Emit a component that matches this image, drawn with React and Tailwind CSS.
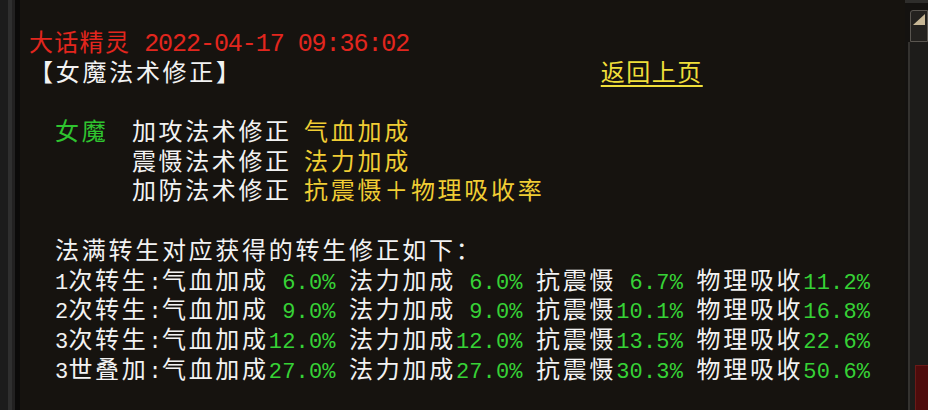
const ZH = "font-['Noto_Sans_CJK_SC',sans-serif] text-[24px]";
const MONO = "font-['Liberation_Mono',monospace] whitespace-pre";

function Zh({ children, className = "" }) {
  return <span className={`${ZH} tracking-[2.72px] ${className}`}>{children}</span>;
}

function En({ children, className = "" }) {
  return <span className={`${MONO} text-[22px] tracking-[0.16px] ${className}`}>{children}</span>;
}

function Val({ v }) {
  return <En className="text-[#36d236]">{(v + "%").padStart(5, " ")}</En>;
}

const ROWS = [
  ["1", "次转生", ["6.0", "6.0", "6.7", "11.2"]],
  ["2", "次转生", ["9.0", "9.0", "10.1", "16.8"]],
  ["3", "次转生", ["12.0", "12.0", "13.5", "22.6"]],
  ["3", "世叠加", ["27.0", "27.0", "30.3", "50.6"]],
];

const SPELLS = [
  ["女魔", "加攻法术修正", "气血加成"],
  ["", "震慑法术修正", "法力加成"],
  ["", "加防法术修正", "抗震慑＋物理吸收率"],
];

function Line({ children, className = "" }) {
  return (
    <div className={`h-[29.7px] leading-[29.7px] whitespace-nowrap flex items-baseline ${className}`}>
      {children}
    </div>
  );
}

function ScrollBar() {
  return (
    <div className="w-[23px] flex flex-col bg-[#141210]">
      <div className="h-[3px] bg-[#2e2d2b]" />
      <div className="h-[7px]" />
      <div className="ml-[5px] h-[32px] border border-[#5a5650] rounded-tl-[3px] bg-[#24221f] overflow-hidden">
        <svg width="18" height="30" viewBox="0 0 18 30">
          <polygon points="2,14 14,3 14,14" fill="#c8b896" />
        </svg>
      </div>
      <div className="ml-[3px] flex-1 flex flex-col justify-end border-l-2 border-[#34322f] bg-[#1d1c1a]">
        <div className="ml-[5px] h-[45px] bg-[#4e0c0c] border-t border-l border-[#6a1a18]" />
      </div>
    </div>
  );
}

export default function App() {
  return (
    <div className="w-[928px] h-[410px] flex bg-[#16130f] overflow-hidden text-[#f2f2f2]">
      <div className="flex">
        <div className="w-[8px] bg-[#1c1c1c]" />
        <div className="w-[4px] bg-[#2f2f2f]" />
        <div className="w-[3px] bg-[#222121]" />
        <div className="w-[5px] bg-[#0b0a09]" />
      </div>

      <div className="flex-1 pt-[26px] pl-[9px]">
        <Line className="text-[#e2261e]">
          <span className={`${ZH} tracking-[1.3px]`}>大话精灵</span>
          <span className={`${MONO} text-[25px] tracking-[-1.05px]`}> 2022-04-17 09:36:02</span>
        </Line>

        <Line>
          <Zh>【女魔法术修正】</Zh>
          <span
            className={`${ZH} tracking-[1.5px] ml-[358px] text-[#f0df3a] underline decoration-2 underline-offset-[4px]`}
          >
            返回上页
          </span>
        </Line>

        <Line />

        {SPELLS.map(([who, name, effect], i) => (
          <Line key={i} className="pl-[26px]">
            <Zh className="w-[77px] text-[#2fc42f]">{who}</Zh>
            <span className={`${ZH} tracking-[2.6px] w-[172px]`}>{name}</span>
            <Zh className="text-[#f0cd34]">{effect}</Zh>
          </Line>
        ))}

        <Line />

        <Line className="pl-[26px]">
          <Zh>法满转生对应获得的转生修正如下：</Zh>
        </Line>

        {ROWS.map(([n, label, vals], i) => (
          <Line key={i} className="pl-[26px]">
            <En>{n}</En>
            <Zh>{label}</Zh>
            <En>:</En>
            <Zh>气血加成</Zh>
            <Val v={vals[0]} />
            <En> </En>
            <Zh>法力加成</Zh>
            <Val v={vals[1]} />
            <En> </En>
            <Zh>抗震慑</Zh>
            <Val v={vals[2]} />
            <En> </En>
            <Zh>物理吸收</Zh>
            <Val v={vals[3]} />
          </Line>
        ))}
      </div>

      <ScrollBar />
    </div>
  );
}
